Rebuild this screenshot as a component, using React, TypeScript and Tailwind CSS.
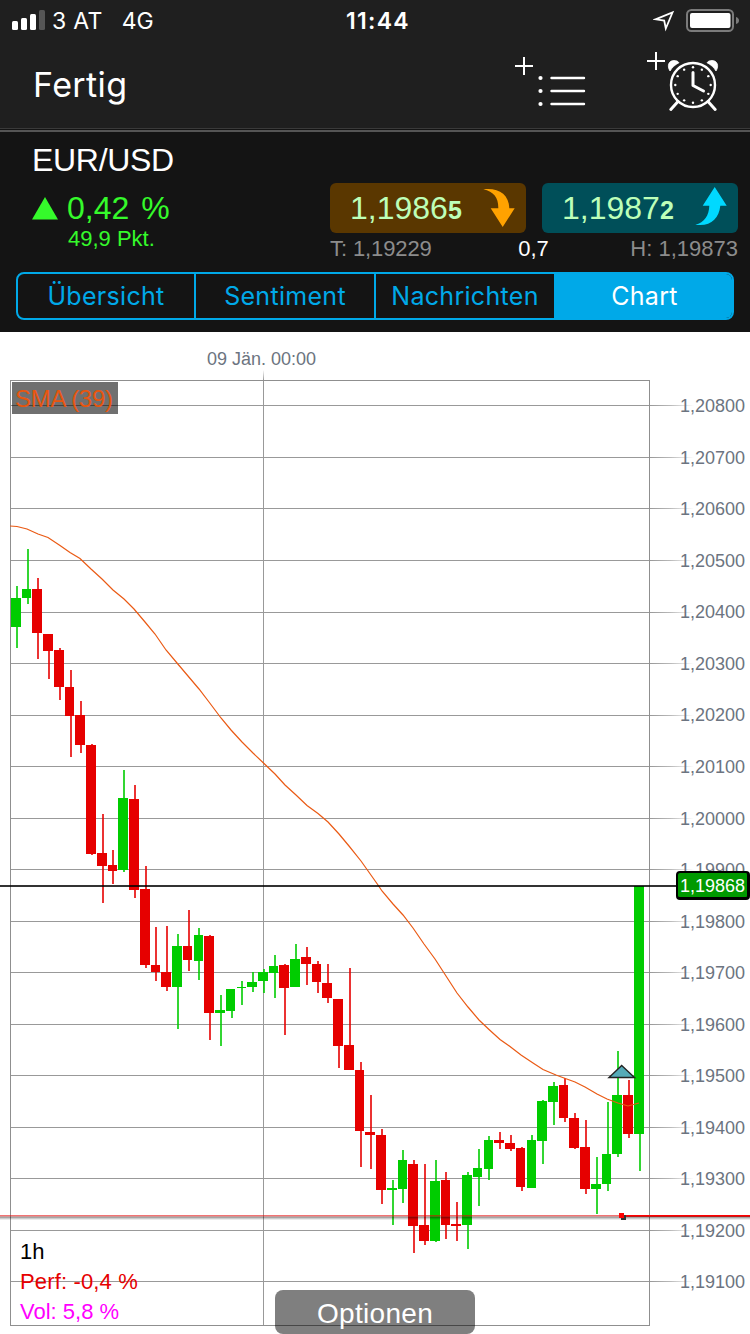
import React from "react";

type Candle = [
  up: number,
  x: number,
  width: number,
  top: number,
  bottom: number,
  wickX: number,
  wickTop: number,
  wickBottom: number,
];

const candles: Candle[] = [
  [1, 11, 10, 598, 627, 16, 586, 648],
  [1, 22, 9, 589, 598, 27, 549, 604],
  [0, 32, 10, 589, 633, 37, 578, 659],
  [0, 43, 10, 634, 651, 48, 634, 679],
  [0, 54, 10, 650, 687, 59, 648, 700],
  [0, 65, 9, 687, 716, 70, 670, 757],
  [0, 75, 10, 715, 745, 80, 701, 753],
  [0, 86, 10, 745, 854, 91, 744, 855],
  [0, 97, 10, 853, 866, 102, 814, 903],
  [0, 108, 9, 865, 871, 112, 850, 884],
  [1, 118, 10, 798, 870, 123, 770, 872],
  [0, 129, 10, 799, 890, 134, 785, 898],
  [0, 140, 10, 889, 965, 145, 866, 968],
  [0, 151, 9, 965, 972, 155, 927, 981],
  [0, 161, 10, 972, 987, 166, 926, 991],
  [1, 172, 10, 946, 987, 177, 934, 1029],
  [0, 183, 9, 946, 960, 188, 910, 971],
  [1, 194, 9, 935, 961, 198, 928, 980],
  [0, 204, 10, 936, 1013, 209, 935, 1040],
  [1, 215, 10, 1010, 1013, 220, 995, 1046],
  [1, 226, 9, 989, 1011, 231, 989, 1018],
  [1, 237, 9, 987, 988, 241, 981, 1005],
  [1, 247, 10, 982, 987, 252, 972, 992],
  [1, 258, 10, 972, 981, 263, 969, 993],
  [1, 269, 9, 966, 973, 274, 955, 998],
  [0, 279, 10, 965, 988, 284, 964, 1035],
  [1, 290, 10, 959, 987, 295, 944, 987],
  [0, 301, 10, 957, 964, 306, 947, 985],
  [0, 312, 9, 964, 982, 317, 961, 993],
  [0, 322, 10, 983, 998, 327, 964, 1003],
  [0, 333, 10, 999, 1046, 338, 999, 1068],
  [0, 344, 10, 1045, 1070, 349, 968, 1070],
  [0, 355, 9, 1070, 1131, 360, 1062, 1167],
  [0, 365, 10, 1132, 1135, 370, 1095, 1169],
  [0, 376, 10, 1135, 1190, 381, 1129, 1204],
  [1, 387, 10, 1188, 1190, 392, 1180, 1225],
  [1, 398, 9, 1160, 1189, 402, 1150, 1203],
  [0, 408, 10, 1164, 1226, 413, 1160, 1253],
  [0, 419, 10, 1225, 1241, 424, 1164, 1245],
  [1, 430, 10, 1181, 1241, 435, 1160, 1242],
  [0, 441, 9, 1180, 1225, 445, 1172, 1239],
  [0, 451, 10, 1224, 1226, 456, 1202, 1241],
  [1, 462, 10, 1175, 1225, 467, 1172, 1249],
  [1, 473, 9, 1168, 1177, 478, 1149, 1206],
  [1, 484, 9, 1140, 1169, 488, 1136, 1180],
  [0, 494, 10, 1140, 1143, 499, 1132, 1149],
  [0, 505, 10, 1143, 1149, 510, 1135, 1151],
  [0, 516, 9, 1148, 1187, 521, 1147, 1191],
  [1, 527, 9, 1140, 1188, 531, 1135, 1188],
  [1, 537, 10, 1101, 1141, 542, 1100, 1164],
  [1, 548, 10, 1086, 1102, 553, 1082, 1125],
  [0, 559, 9, 1085, 1118, 564, 1078, 1122],
  [0, 569, 10, 1118, 1148, 574, 1113, 1149],
  [0, 580, 10, 1147, 1189, 585, 1120, 1194],
  [1, 591, 10, 1184, 1189, 596, 1157, 1214],
  [1, 602, 9, 1154, 1184, 607, 1102, 1191],
  [1, 612, 10, 1095, 1154, 617, 1051, 1157],
  [0, 623, 10, 1095, 1134, 628, 1080, 1138],
  [1, 634, 10, 886, 1134, 639, 886, 1171],
];

const gridLines = [405, 457, 508, 560, 612, 663, 715, 766, 818, 869, 921, 972, 1024, 1075, 1127, 1178, 1230, 1281];

const priceLabels = [
  "1,20800", "1,20700", "1,20600", "1,20500", "1,20400", "1,20300",
  "1,20200", "1,20100", "1,20000", "1,19900", "1,19800", "1,19700",
  "1,19600", "1,19500", "1,19400", "1,19300", "1,19200", "1,19100",
];

const movingAverage =
  "10,526 17,526.5 27,529 38,534 48,537.5 60,545.5 70,552.5 80,558.5 91,569 102,579 113,590 124,599 134,609 145,622 155,634 166,650 177,663 188,676 199,689 209,702 221,718 231,730 242,742 253,753 264,763.5 275,774 285,785 296,795 307,805.5 318,813.5 328,822 339,834 349,846 361,861 378,885 382,891 393,904 403,915 413,928 424,944 435,959 446,976 457,993 468,1007 479,1020 489,1029.5 500,1039.5 510,1046.5 521,1055 533,1063 543,1069.5 556,1075 564,1078 575,1082 585,1087 597,1094 607,1099 618,1103 628,1106 639,1103";

const helvetica = "font-['Liberation_Sans',Arial,sans-serif]";

function StatusBar() {
  return (
    <div className="flex h-[41px] items-center text-[23px] leading-none text-white">
      <div className="flex w-[343px] items-center pl-[12px]">
        <svg width="33" height="20" viewBox="0 0 33 20" className="mt-[-1px]">
          <rect x="0" y="11" width="6" height="9" rx="1.5" fill="#fff" />
          <rect x="9" y="8" width="6" height="12" rx="1.5" fill="#fff" />
          <rect x="18" y="4" width="6" height="16" rx="1.5" fill="#fff" />
          <rect x="27" y="0" width="6" height="20" rx="1.5" fill="#565656" />
        </svg>
        <span className="ml-[7px] mt-[1px] tracking-[0.300px]">3 AT</span>
        <span className="ml-[19px] mt-[1px]">4G</span>
      </div>
      <span className="mt-[1px] w-[70px] pl-[3px] font-semibold tracking-[1.300px]">11:44</span>
      <svg width="86" height="26" viewBox="653 8 86 26" className="ml-auto mr-[11px]">
        <path d="M655.5 19.3 672.5 12.5 665.8 28.5 664.2 20.6Z" fill="none" stroke="#fff" strokeWidth="1.8" />
        <rect x="687" y="10" width="46" height="21" rx="4.5" fill="none" stroke="#7b7b7b" strokeWidth="2" />
        <rect x="690" y="13" width="40.5" height="15" rx="2" fill="#fff" />
        <path d="M736 17q3 1 3 3.5t-3 3.5z" fill="#7b7b7b" />
      </svg>
    </div>
  );
}

function AddToListIcon() {
  return (
    <svg width="72" height="52" viewBox="514 56 72 52" stroke="#fff" strokeLinecap="round">
      <path d="M515 66h18M524 57v18" strokeWidth="2" strokeLinecap="butt" />
      <path d="M551.500 78h32.500M551.500 91h32.500M551.500 104h32.500" strokeWidth="2.400" />
      <path d="M540.500 78h.01M540.500 91h.01M540.500 104h.01" strokeWidth="4.200" />
    </svg>
  );
}

function AddAlarmIcon() {
  const ticks = Array.from({ length: 12 }, (_, i) => {
    const angle = (i * Math.PI) / 6;
    return { x: 693 + 17.7 * Math.sin(angle), y: 85 - 17.7 * Math.cos(angle) };
  });
  return (
    <svg width="74" height="62" viewBox="646 51 74 62" fill="none" stroke="#fff">
      <path d="M647 61h18M656 52v18" strokeWidth="2" />
      <path d="M670 71C666.500 65.500 669 60.500 674 60.500c2.200 0 4 .700 5 2.200-4 2-7 4.800-9 8.300zM716 71C719.500 65.500 717 60.500 712 60.500c-2.200 0-4 .700-5 2.200 4 2 7 4.800 9 8.300z" fill="#fff" strokeWidth="0.800" />
      <circle cx="693" cy="85" r="22" strokeWidth="2.400" />
      <path d="M678 101.500 670.800 109.500M708 101.500 715.200 109.500" strokeWidth="3" strokeLinecap="round" />
      <path d="M693 72.500v13l10.500 5.500" strokeWidth="3" strokeLinecap="round" strokeLinejoin="round" />
      {ticks.map((t, i) => (
        <circle key={i} cx={t.x} cy={t.y} r="1.200" fill="#fff" stroke="none" />
      ))}
    </svg>
  );
}

function Toolbar() {
  return (
    <div className="flex h-[87px] items-start text-white">
      <span className="ml-[33px] mt-[23px] text-[34px] leading-[42px] tracking-[0.400px]">Fertig</span>
      <button className="ml-auto mt-[15px]" aria-label="Zur Liste"><AddToListIcon /></button>
      <button className="ml-[60px] mr-[30px] mt-[10px]" aria-label="Alarm"><AddAlarmIcon /></button>
    </div>
  );
}

function Quote({ main, last, down }: { main: string; last: string; down?: boolean }) {
  return (
    <div className={`flex h-[50px] w-[196px] items-center rounded-[6px] pl-[20px] text-[#bdffb8] ${down ? "bg-[#5a3700]" : "bg-[#004f59]"}`}>
      <span className="pt-[2px] text-[32px] leading-[50px]">
        {main}<span className="text-[25px] font-bold">{last}</span>
      </span>
      {down ? (
        <svg width="33" height="40" viewBox="483 188 33 40" className="ml-auto mr-[10px]">
          <path d="M483.300 189.300C498 187.500 509 194 509.300 208.300H514.700L502.700 227 490.700 208.300H498.300C498.500 198 494 191.500 483.300 189.300Z" fill="#ffa200" />
        </svg>
      ) : (
        <svg width="33" height="40" viewBox="695 186 33 40" className="mb-[4px] ml-auto mr-[10px]">
          <path d="M714.700 187 726.700 205.700H720.300C719 219 710 227 695.300 224.700 704.500 222.500 709 215.500 709.300 205.700H702.700Z" fill="#00d9ff" />
        </svg>
      )}
    </div>
  );
}

function Instrument() {
  return (
    <div className={`flex h-[140px] ${helvetica}`}>
      <div className="flex w-[330px] flex-col pl-[32px]">
        <h1 className="mt-[8px] text-[32px] leading-[40px] tracking-[-0.300px] text-white">EUR/USD</h1>
        <div className="mt-[8px] flex items-center text-[#35fa2b]">
          <svg width="26" height="23" viewBox="0 0 26 23"><path d="M13 0 26 22.500H0Z" fill="#35fa2b" /></svg>
          <span className="ml-[9px] pt-[1px] text-[32px] leading-[39px] [word-spacing:3px]">0,42 %</span>
        </div>
        <span className="ml-[36px] mt-[-2px] text-[22px] leading-[26px] text-[#35fa2b]">49,9 Pkt.</span>
      </div>
      <div className="mt-[51px] flex w-[408px] flex-col">
        <div className="flex justify-between">
          <Quote main="1,1986" last="5" down />
          <Quote main="1,1987" last="2" />
        </div>
        <div className="mt-[3px] flex justify-between text-[22px] leading-[26px] text-[#8c8c8c]">
          <span className="w-[150px] tracking-[-0.100px]">T: 1,19229</span>
          <span className="text-white">0,7</span>
          <span className="w-[151px] text-right">H: 1,19873</span>
        </div>
      </div>
    </div>
  );
}

function Tabs() {
  return (
    <div className="mx-[16px] flex h-[48px] w-[718px] overflow-hidden rounded-[8px] border-2 border-[#00a9e8] text-[25px] leading-[45px] tracking-[0.300px] text-[#00a9e8]">
      <span className="w-[178px] border-r-2 border-[#00a9e8] text-center">Übersicht</span>
      <span className="w-[180px] border-r-2 border-[#00a9e8] text-center">Sentiment</span>
      <span className="w-[178px] text-center">Nachrichten</span>
      <span className="flex-1 bg-[#00a9e8] pl-[3px] text-center text-white">Chart</span>
    </div>
  );
}

function ChartDrawing() {
  return (
    <svg width="750" height="1002" viewBox="0 332 750 1002" className="absolute inset-0">
      <defs>
        <linearGradient id="tickFade" x1="0" x2="1">
          <stop offset="0" stopColor="#999" />
          <stop offset="0.450" stopColor="#999" stopOpacity="0.700" />
          <stop offset="1" stopColor="#999" stopOpacity="0" />
        </linearGradient>
        <linearGradient id="timeFade" x1="0" x2="0" y1="1" y2="0">
          <stop offset="0" stopColor="#999" />
          <stop offset="1" stopColor="#999" stopOpacity="0" />
        </linearGradient>
      </defs>
      {gridLines.map((y) => (
        <g key={y}>
          <rect x="10" y={y} width="640" height="1" fill="#999" />
          <rect x="650" y={y} width="44" height="1" fill="url(#tickFade)" />
        </g>
      ))}
      <rect x="263" y="380" width="1" height="946" fill="#999" />
      <rect x="263" y="370" width="1" height="10" fill="url(#timeFade)" />
      <rect x="10.500" y="380.500" width="639" height="945" fill="none" stroke="#8f8f8f" />
      {candles.map(([up, x, width, top, bottom, wickX, wickTop, wickBottom]) => {
        const color = up ? "#00cc00" : "#e60000";
        return (
          <g key={x} fill={color}>
            <rect x={wickX} y={wickTop} width="2" height={wickBottom - wickTop} opacity="0.800" />
            <rect x={x} y={top} width={width} height={bottom - top} />
          </g>
        );
      })}
      <polyline points={movingAverage} fill="none" stroke="#ea5a14" strokeWidth="1.200" />
      <rect x="0" y="885" width="678" height="2" fill="#000" opacity="0.800" />
      <rect x="0" y="1215" width="620" height="1" fill="#e60000" opacity="0.550" />
      <rect x="0" y="1216" width="620" height="1" fill="#901818" opacity="0.450" />
      <rect x="0" y="1217" width="750" height="1" fill="#000" opacity="0.350" />
      <rect x="0" y="1218" width="750" height="1" fill="#000" opacity="0.200" />
      <rect x="0" y="1219" width="750" height="1" fill="#000" opacity="0.080" />
      <rect x="620" y="1215" width="130" height="1" fill="#ff0000" />
      <rect x="620" y="1216" width="130" height="1" fill="#c01818" />
      <rect x="621" y="1215" width="5" height="5" fill="#333" />
      <rect x="619" y="1213" width="5" height="5" fill="#ff0000" />
      <path d="M621.700 1065.500 634.500 1077.500H609Z" fill="#55abb8" stroke="#222" strokeWidth="1.400" />
    </svg>
  );
}

function Chart() {
  return (
    <div className={`relative h-[1002px] bg-white ${helvetica}`}>
      <ChartDrawing />
      <div className="absolute left-[207px] top-[17px] text-[18px] leading-[20px] text-[#6c7480]">09 Jän. 00:00</div>
      <div className="absolute right-[5px] top-[48.400px] flex flex-col text-right text-[18px] text-[#6c7480]">
        {priceLabels.map((label) => (
          <span key={label} className="h-[51.530px] leading-[52px]">{label}</span>
        ))}
      </div>
      <div className="absolute left-[12px] top-[50px] h-[32px] w-[106px] bg-black/56 pl-[3px] text-[24px] leading-[34px] tracking-[-0.300px] text-[#e8560f]">SMA (39)</div>
      <div className="absolute left-[676px] top-[539px] h-[29px] w-[74px] rounded-[4px] border-2 border-b-3 border-r-3 border-black bg-[#009900] text-center text-[18px] leading-[27px] text-white">1,19868</div>
      <div className="absolute left-[20px] top-[905px] flex flex-col text-[22px] leading-[30px]">
        <span className="text-black">1h</span>
        <span className="tracking-[0.150px] text-[#e60000]">Perf: -0,4 %</span>
        <span className="text-[#ff00ff]">Vol: 5,8 %</span>
      </div>
      <button className="absolute left-[275px] top-[958px] h-[44px] w-[200px] rounded-[8px] bg-black/50 pt-[2px] text-[28px] leading-[44px] tracking-[0.300px] text-white">Optionen</button>
    </div>
  );
}

export default function App() {
  return (
    <div className="h-[1334px] w-[750px] overflow-hidden bg-[#141414] font-['Inter',sans-serif]">
      <header className="h-[128px] bg-[#1f1f1f]">
        <StatusBar />
        <Toolbar />
      </header>
      <div className="h-[1px] bg-[#3a3a3a]" />
      <div className="h-[1px] bg-[#141414]" />
      <div className="h-[2px] bg-[#555]" />
      <section className="h-[200px]">
        <Instrument />
        <Tabs />
      </section>
      <Chart />
    </div>
  );
}
